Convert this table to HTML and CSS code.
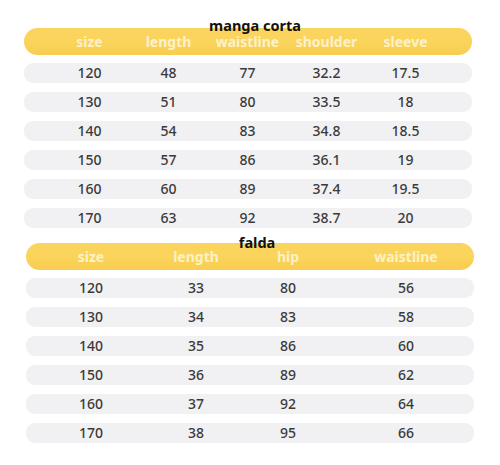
FILE: index.html
```html
<!DOCTYPE html>
<html>
<head>
<meta charset="utf-8">
<link rel="stylesheet" href="styles.css">
</head>
<body>
<div class="sheet">
  <section class="table t1">
    <h2 class="title">manga corta</h2>
    <div class="head grid5"><span>size</span><span>length</span><span>waistline</span><span>shoulder</span><span>sleeve</span></div>
    <div class="rows">
      <div class="row grid5"><span>120</span><span>48</span><span>77</span><span>32.2</span><span>17.5</span></div>
      <div class="row grid5"><span>130</span><span>51</span><span>80</span><span>33.5</span><span>18</span></div>
      <div class="row grid5"><span>140</span><span>54</span><span>83</span><span>34.8</span><span>18.5</span></div>
      <div class="row grid5"><span>150</span><span>57</span><span>86</span><span>36.1</span><span>19</span></div>
      <div class="row grid5"><span>160</span><span>60</span><span>89</span><span>37.4</span><span>19.5</span></div>
      <div class="row grid5"><span>170</span><span>63</span><span>92</span><span>38.7</span><span>20</span></div>
    </div>
  </section>
  <section class="table t2">
    <h2 class="title">falda</h2>
    <div class="head grid4"><span>size</span><span>length</span><span>hip</span><span>waistline</span></div>
    <div class="rows">
      <div class="row grid4"><span>120</span><span>33</span><span>80</span><span>56</span></div>
      <div class="row grid4"><span>130</span><span>34</span><span>83</span><span>58</span></div>
      <div class="row grid4"><span>140</span><span>35</span><span>86</span><span>60</span></div>
      <div class="row grid4"><span>150</span><span>36</span><span>89</span><span>62</span></div>
      <div class="row grid4"><span>160</span><span>37</span><span>92</span><span>64</span></div>
      <div class="row grid4"><span>170</span><span>38</span><span>95</span><span>66</span></div>
    </div>
  </section>
</div>
</body>
</html>
```
FILE: styles.css
```css
html, body {
  margin: 0;
  padding: 0;
  background: #ffffff;
}
body {
  width: 500px;
  height: 465px;
  overflow: hidden;
  font-family: "Noto Sans", "Noto Sans CJK SC", sans-serif;
}
.sheet {
  padding-top: 17px;
  display: flex;
  flex-direction: column;
}
.table {
  display: flex;
  flex-direction: column;
  width: 448px;
}
.t1 {
  margin-left: 24px;
}
.t2 {
  margin-left: 26px;
  margin-top: 6px;
}
.title {
  position: relative;
  z-index: 1;
  margin: 0 0 -5px 0;
  padding-left: 14px;
  text-align: center;
  font-size: 14.5px;
  line-height: 16px;
  font-weight: 700;
  color: #111111;
}
.t2 .title {
  margin-bottom: -7px;
}
.head {
  height: 27px;
  border-radius: 14px;
  background: linear-gradient(180deg, #fad45f 0%, #fbd45c 50%, #f8cd50 100%);
  color: #fdf1c8;
  font-size: 14px;
  font-weight: 700;
  align-items: center;
}
.head span {
  padding-top: 1px;
}
.rows {
  margin-top: 8px;
  display: flex;
  flex-direction: column;
  gap: 9px;
}
.row {
  height: 20px;
  border-radius: 9px;
  background: #f1f1f3;
  color: #3a3a3a;
  font-size: 14px;
  font-weight: 500;
  align-items: center;
}
.grid5 {
  display: grid;
  grid-template-columns: repeat(5, 79px);
  padding-left: 26px;
}
.grid4 {
  display: grid;
  grid-template-columns: 130px 80px 104px 132px;
}
.grid5 span, .grid4 span {
  text-align: center;
  line-height: 20px;
}
```
